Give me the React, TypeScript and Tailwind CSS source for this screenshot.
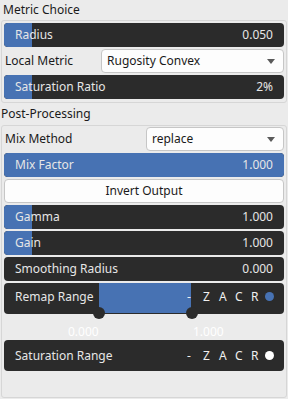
import React from "react";

const font = { fontFamily: '"Noto Sans", "DejaVu Sans", sans-serif' };

function Slider({ label, value, fill }: { label: string; value: string; fill: "small" | "full" | "none" }) {
  return (
    <div className="relative h-[24px] rounded-[4px] bg-[#2b2b2b] overflow-hidden">
      {fill === "small" && <div className="absolute left-0 top-0 h-full w-[28px] bg-[#4772b3]" />}
      {fill === "full" && <div className="absolute inset-0 bg-[#4772b3]" />}
      <div className="relative flex h-full items-center justify-between pl-[11px] pr-[11px] text-[12px] text-[#e6e6e6]">
        <span>{label}</span>
        <span>{value}</span>
      </div>
    </div>
  );
}

function Dropdown({ text }: { text: string }) {
  return (
    <div className="flex h-[24px] flex-1 items-center justify-between rounded-[4px] border border-[#c6c6c6] bg-[#fdfdfd] pl-[5px] pr-[8px] text-[12px] text-[#1a1a1a]">
      <span>{text}</span>
      <svg width="8" height="5" viewBox="0 0 8 5">
        <path d="M0 0 L8 0 L4 5 Z" fill="#5a5a5a" />
      </svg>
    </div>
  );
}

function Zacr({ dot }: { dot: string }) {
  return (
    <div className="flex items-center text-[12px] text-[#f0f0f0]">
      <span className="w-[16px]">-</span>
      <span className="w-[16px]">Z</span>
      <span className="w-[16px]">A</span>
      <span className="w-[16px]">C</span>
      <span className="w-[14px]">R</span>
      <span className={`h-[9px] w-[9px] rounded-full ${dot}`} />
    </div>
  );
}

export default function App() {
  return (
    <div className="h-[399px] w-[288px] overflow-hidden bg-[#ebebeb]" style={font}>
      <div className="flex h-[20px] items-center pl-[3px] text-[12px] text-[#1a1a1a]">Metric Choice</div>
      <div className="mx-[1px] flex flex-col gap-[2px] rounded-[3px] border border-[#d6d6d6] px-[2px] pt-[2px] pb-[3px]">
        <Slider label="Radius" value="0.050" fill="small" />
        <div className="flex items-center">
          <span className="w-[97px] pl-[1px] text-[12px] text-[#1a1a1a]">Local Metric</span>
          <Dropdown text="Rugosity Convex" />
        </div>
        <Slider label="Saturation Ratio" value="2%" fill="small" />
      </div>
      <div className="flex h-[22px] items-center pl-[1px] text-[12px] text-[#1a1a1a]">Post-Processing</div>
      <div className="mx-[1px] flex h-[273px] flex-col rounded-[3px] border border-[#d6d6d6] px-[2px] pt-[1px]">
        <div className="flex flex-col gap-[2px]">
          <div className="flex items-center">
            <span className="w-[142px] pl-[1px] text-[12px] text-[#1a1a1a]">Mix Method</span>
            <Dropdown text="replace" />
          </div>
          <Slider label="Mix Factor" value="1.000" fill="full" />
          <div className="flex h-[24px] items-center justify-center rounded-[4px] border border-[#c6c6c6] bg-[#fdfdfd] text-[12px] text-[#1a1a1a]">
            Invert Output
          </div>
          <Slider label="Gamma" value="1.000" fill="small" />
          <Slider label="Gain" value="1.000" fill="small" />
          <Slider label="Smoothing Radius" value="0.000" fill="none" />
          <div className="relative h-[31px] rounded-[4px] bg-[#2b2b2b]">
            <div className="absolute left-[95px] top-0 h-[30px] w-[92px] bg-[#4772b3]" />
            <div className="relative flex h-full items-center justify-between pl-[11px] pr-[10px] text-[12px] text-[#e6e6e6]">
              <span className="-mt-[4px]">Remap Range</span>
              <div className="-mt-[4px]">
                <Zacr dot="bg-[#4772b3]" />
              </div>
            </div>
            <div className="absolute left-[89px] top-[24px] h-[12px] w-[12px] rounded-full bg-[#2b2b2b]" />
            <div className="absolute left-[182px] top-[24px] h-[12px] w-[12px] rounded-full bg-[#2b2b2b]" />
          </div>
        </div>
        <div className="relative h-[26px]">
          <span className="absolute left-[64px] top-[9px] text-[12px] text-[#ffffff]">0.000</span>
          <span className="absolute left-[189px] top-[9px] text-[12px] text-[#ffffff]">1.000</span>
        </div>
        <div className="flex h-[31px] items-center justify-between rounded-[4px] bg-[#2b2b2b] pl-[11px] pr-[10px] text-[12px] text-[#e6e6e6]">
          <span>Saturation Range</span>
          <Zacr dot="bg-[#ffffff]" />
        </div>
      </div>
    </div>
  );
}
